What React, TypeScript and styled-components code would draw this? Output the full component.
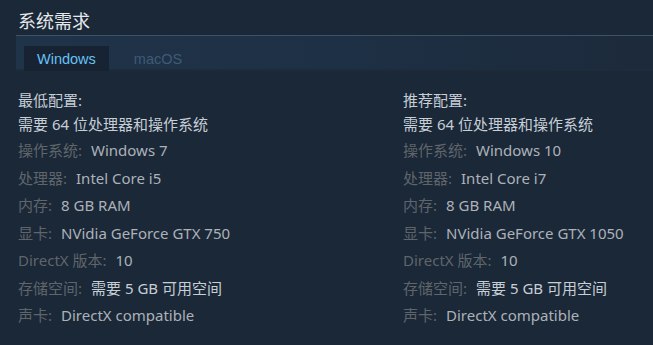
import styled, { createGlobalStyle } from 'styled-components'

const GlobalStyle = createGlobalStyle`
  html, body {
    margin: 0;
    padding: 0;
    background: #1b2838;
  }
  body {
    font-family: "Noto Sans", "Noto Sans CJK SC", sans-serif;
  }
`

const Page = styled.div`
  width: 653px;
  height: 345px;
  overflow: hidden;
  background: #1b2838;
  padding-top: 8px;
  box-sizing: border-box;
`

const Title = styled.h2`
  margin: 0 0 0 16px;
  padding: 0 0 0 2px;
  font-size: 18px;
  font-weight: 400;
  line-height: 27px;
  color: #e5e9ec;
  border-bottom: 1px solid #3c5268;
`

const TabStrip = styled.div`
  margin-left: 16px;
  height: 35px;
  display: flex;
  align-items: flex-end;
  padding-left: 8px;
  background: linear-gradient(90deg, #1f3349 0%, #1e3045 50%, #1c2a3b 100%);
  box-shadow: inset 0 -2px 0 #1d2b3b;
`

const Tab = styled.div<{ $active?: boolean }>`
  height: 25px;
  padding: 0 13px;
  display: flex;
  align-items: center;
  font-family: "Liberation Sans", Arial, sans-serif;
  font-size: 14.5px;
  color: ${(p) => (p.$active ? '#67c1f5' : '#405b75')};
  background: ${(p) => (p.$active ? '#172332' : 'transparent')};
  margin-right: ${(p) => (p.$active ? '12px' : '0')};
`

const Columns = styled.div`
  display: grid;
  grid-template-columns: 385px 1fr;
  padding: 17px 0 0 18px;
`

const Column = styled.div`
  display: flex;
  flex-direction: column;
`

const Heading = styled.div`
  font-size: 15px;
  line-height: 24px;
  color: #c6ced6;
`

const Row = styled.div`
  font-size: 15px;
  line-height: 27.5px;
  color: #acb2b8;
  white-space: nowrap;
`

const Note = styled(Row)`
  line-height: 24px;
  margin-bottom: 1px;
  color: #c6ced6;
`

const Label = styled.span`
  color: #5f656b;
  margin-right: 9px;
`

const Value = styled.span<{ $bright?: boolean }>`
  color: ${(p) => (p.$bright ? '#c6ced6' : '#acb2b8')};
`

type Spec = { label: string; value: string; bright?: boolean }

const minimum: Spec[] = [
  { label: '操作系统:', value: 'Windows 7' },
  { label: '处理器:', value: 'Intel Core i5' },
  { label: '内存:', value: '8 GB RAM' },
  { label: '显卡:', value: 'NVidia GeForce GTX 750' },
  { label: 'DirectX 版本:', value: '10' },
  { label: '存储空间:', value: '需要 5 GB 可用空间', bright: true },
  { label: '声卡:', value: 'DirectX compatible' },
]

const recommended: Spec[] = [
  { label: '操作系统:', value: 'Windows 10' },
  { label: '处理器:', value: 'Intel Core i7' },
  { label: '内存:', value: '8 GB RAM' },
  { label: '显卡:', value: 'NVidia GeForce GTX 1050' },
  { label: 'DirectX 版本:', value: '10' },
  { label: '存储空间:', value: '需要 5 GB 可用空间', bright: true },
  { label: '声卡:', value: 'DirectX compatible' },
]

const SpecColumn = ({ title, specs }: { title: string; specs: Spec[] }) => (
  <Column>
    <Heading>{title}</Heading>
    <Note>需要 64 位处理器和操作系统</Note>
    {specs.map((s) => (
      <Row key={s.label}>
        <Label>{s.label}</Label>
        <Value $bright={s.bright}>{s.value}</Value>
      </Row>
    ))}
  </Column>
)

export default function App() {
  return (
    <>
      <GlobalStyle />
      <Page>
        <Title>系统需求</Title>
        <TabStrip>
          <Tab $active>Windows</Tab>
          <Tab>macOS</Tab>
        </TabStrip>
        <Columns>
          <SpecColumn title="最低配置:" specs={minimum} />
          <SpecColumn title="推荐配置:" specs={recommended} />
        </Columns>
      </Page>
    </>
  )
}
